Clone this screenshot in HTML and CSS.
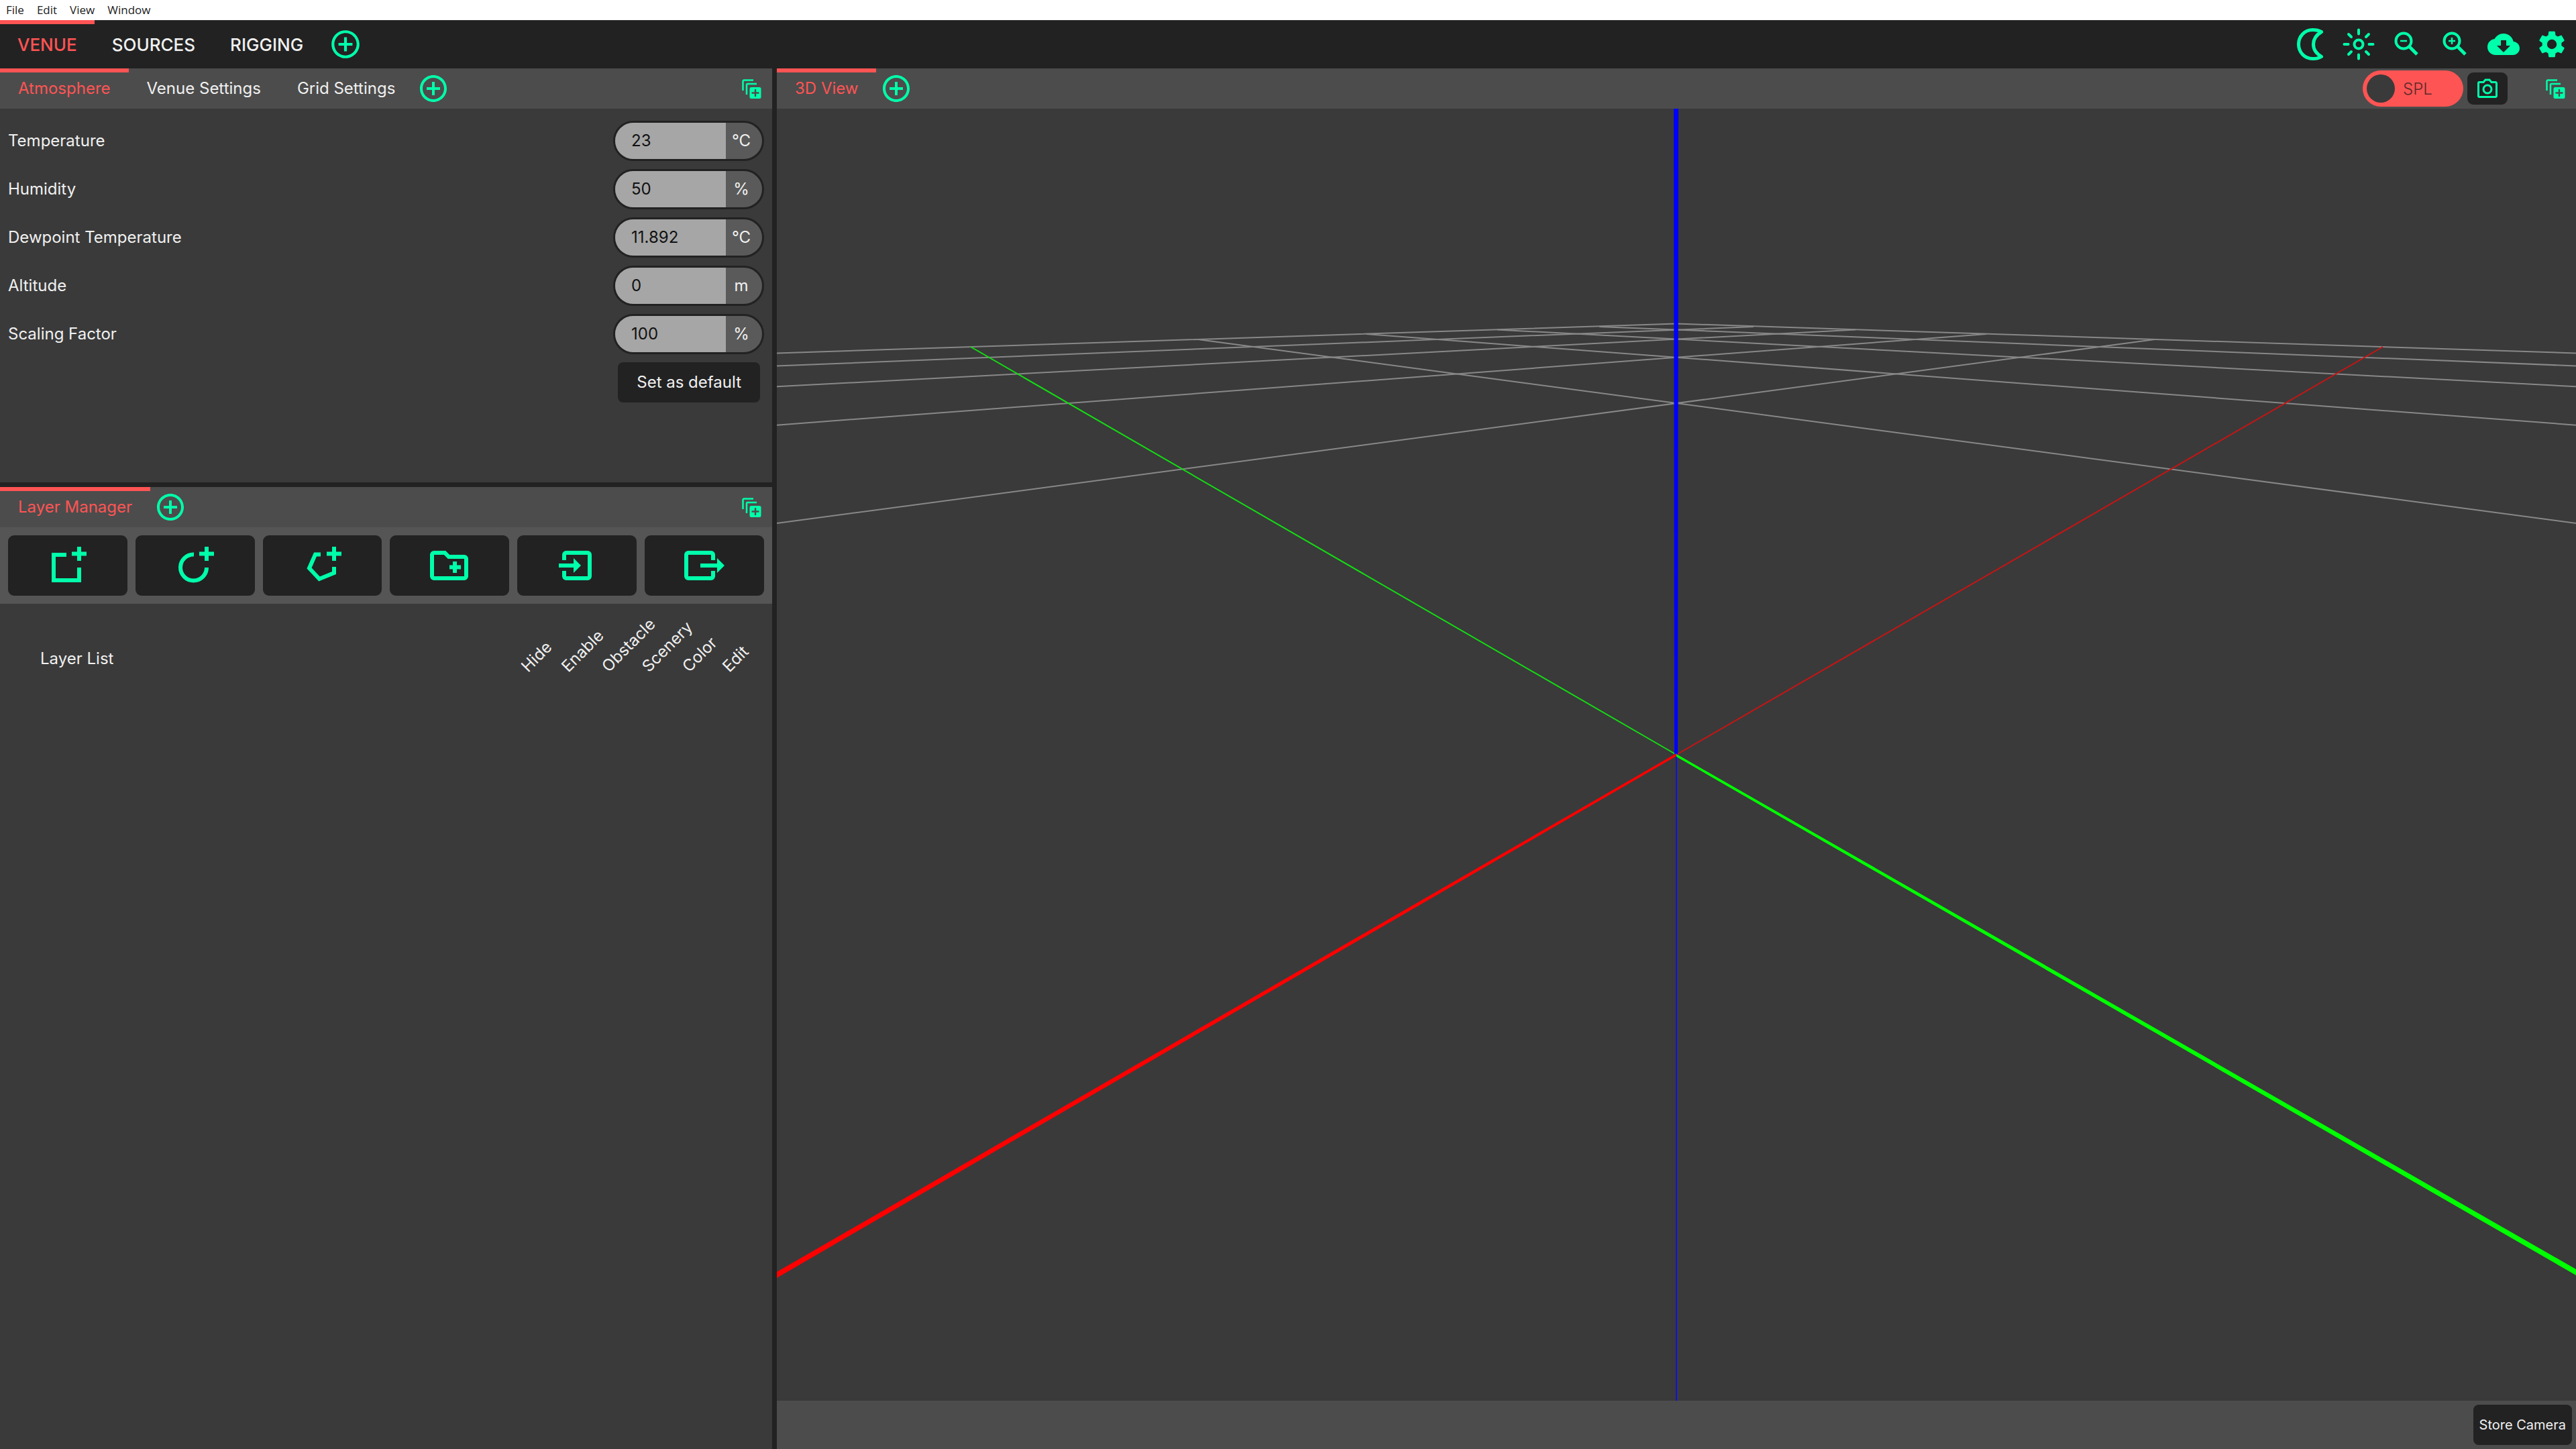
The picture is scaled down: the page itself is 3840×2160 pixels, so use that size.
FILE: index.html
```
<!DOCTYPE html>
<html lang="en">
<head>
<meta charset="utf-8">
<title>Venue</title>
<link rel="stylesheet" href="styles.css">
</head>
<body>
<svg class="defs" aria-hidden="true">
  <symbol id="i-plus" viewBox="0 0 24 24"><path d="M13 7h-2v4H7v2h4v4h2v-4h4v-2h-4V7zm-1-5C6.480 2 2 6.480 2 12s4.480 10 10 10 10-4.480 10-10S17.520 2 12 2zm0 18c-4.410 0-8-3.590-8-8s3.590-8 8-8 8 3.590 8 8-3.590 8-8 8z"/></symbol>
  <symbol id="i-dock" viewBox="0 0 29 29"><path d="M1.500 17V3a1.500 1.500 0 0 1 1.500-1.500H17M7 23V8.500A1.500 1.500 0 0 1 8.500 7H22" fill="none" stroke="currentColor" stroke-width="2.500"/><path fill-rule="evenodd" d="M14 12h12a2.500 2.500 0 0 1 2.500 2.500v12A2.500 2.500 0 0 1 26 29H14a2.500 2.500 0 0 1-2.500-2.500v-12A2.500 2.500 0 0 1 14 12zm4.800 3v4.300h-4.300v2.400h4.300V26h2.400v-4.300h4.300v-2.400h-4.300V15z"/></symbol>
</svg>

<nav class="menubar">
  <a href="#">File</a><a href="#">Edit</a><a href="#">View</a><a href="#">Window</a>
</nav>

<header class="topbar">
  <div class="tabs tabs-main">
    <button class="tab active">VENUE</button>
    <button class="tab">SOURCES</button>
    <button class="tab">RIGGING</button>
    <button class="add" aria-label="Add workspace"><svg><use href="#i-plus"/></svg></button>
  </div>
  <div class="actions">
    <button aria-label="Dark theme"><svg viewBox="-2 0 48 48"><path d="M38.500 5.500C34 2.800 29 2.500 25.500 2.500 13.500 2.500 4.500 12 4.500 24s9 21.500 21 21.500c4.500 0 9-.8 13-3.200C31 38 26.500 31.500 26.500 24S31 10 38.500 5.500z" fill="none" stroke="currentColor" stroke-width="5" stroke-linejoin="round"/></svg></button>
    <button aria-label="Brightness"><svg viewBox="0 0 48 48"><g fill="none" stroke="currentColor" stroke-width="4" stroke-linecap="round"><circle cx="24" cy="24" r="6.500"/><path d="M24 2.500v6M24 39.500v6M2.500 24h6M39.500 24h6M9 9l4 4M35 35l4 4M39 9l-4 4M13 35l-4 4"/></g></svg></button>
    <button aria-label="Zoom out"><svg viewBox="0 0 48 48"><g fill="none" stroke="currentColor"><circle cx="19" cy="19" r="11.500" stroke-width="4"/><path d="M28 28l11 11" stroke-width="5"/><path d="M14 19h10" stroke-width="2.500"/></g></svg></button>
    <button aria-label="Zoom in"><svg viewBox="0 0 48 48"><g fill="none" stroke="currentColor"><circle cx="19" cy="19" r="11.500" stroke-width="4"/><path d="M28 28l11 11" stroke-width="5"/><path d="M14 19h10M19 14v10" stroke-width="2.500"/></g></svg></button>
    <button aria-label="Download from cloud"><svg viewBox="0 0 24 24"><path d="M19.350 10.040C18.670 6.590 15.640 4 12 4 9.110 4 6.600 5.640 5.350 8.040 2.340 8.360 0 10.910 0 14c0 3.310 2.690 6 6 6h13c2.760 0 5-2.240 5-5 0-2.640-2.050-4.780-4.650-4.960zM17 13l-5 5-5-5h3V9h4v4h3z"/></svg></button>
    <button aria-label="Settings"><svg viewBox="0 0 24 24"><path d="M19.140 12.940c.04-.3.060-.61.060-.94 0-.32-.02-.64-.07-.94l2.030-1.580a.49.49 0 0 0 .12-.61l-1.920-3.320a.49.49 0 0 0-.59-.22l-2.390.96c-.5-.38-1.030-.7-1.620-.94l-.36-2.540a.48.48 0 0 0-.48-.41h-3.840a.47.47 0 0 0-.47.41l-.36 2.540c-.59.24-1.130.57-1.620.94l-2.390-.96a.48.48 0 0 0-.59.220L2.740 8.870a.47.47 0 0 0 .12.610l2.030 1.580c-.05.300-.09.630-.09.940s.02.640.07.940l-2.030 1.580a.49.49 0 0 0-.12.610l1.920 3.320c.12.220.37.290.59.220l2.390-.96c.5.380 1.030.7 1.620.94l.36 2.540c.05.240.24.410.48.410h3.840c.24 0 .44-.17.470-.41l.36-2.540c.59-.24 1.130-.56 1.620-.94l2.390.96c.22.080.47 0 .59-.22l1.920-3.320a.47.47 0 0 0-.12-.61zM12 15.600a3.600 3.600 0 1 1 0-7.200 3.600 3.600 0 0 1 0 7.200z"/></svg></button>
  </div>
</header>

<main class="workspace">
  <div class="side">
    <section class="panel atmosphere">
      <div class="panel-head">
        <div class="tabs">
          <button class="tab active">Atmosphere</button>
          <button class="tab">Venue Settings</button>
          <button class="tab">Grid Settings</button>
          <button class="add" aria-label="Add tab"><svg><use href="#i-plus"/></svg></button>
        </div>
        <button class="dock" aria-label="Add panel"><svg><use href="#i-dock"/></svg></button>
      </div>
      <form class="fields">
        <div class="field"><label for="temp">Temperature</label><span class="pill"><input id="temp" value="23"><span class="unit">°C</span></span></div>
        <div class="field"><label for="hum">Humidity</label><span class="pill"><input id="hum" value="50"><span class="unit">%</span></span></div>
        <div class="field"><label for="dew">Dewpoint Temperature</label><span class="pill"><input id="dew" value="11.892"><span class="unit">°C</span></span></div>
        <div class="field"><label for="alt">Altitude</label><span class="pill"><input id="alt" value="0"><span class="unit">m</span></span></div>
        <div class="field"><label for="scale">Scaling Factor</label><span class="pill"><input id="scale" value="100"><span class="unit">%</span></span></div>
        <div class="field submit"><button type="button" class="btn">Set as default</button></div>
      </form>
    </section>

    <section class="panel layers">
      <div class="panel-head">
        <div class="tabs">
          <button class="tab active">Layer Manager</button>
          <button class="add" aria-label="Add tab"><svg><use href="#i-plus"/></svg></button>
        </div>
        <button class="dock" aria-label="Add panel"><svg><use href="#i-dock"/></svg></button>
      </div>
      <div class="toolbar">
        <button aria-label="Add rectangle"><svg viewBox="2 0 64 64"><path d="M32 16H13v38h38V35M51 4v21M40 14.500h22" /></svg></button>
        <button aria-label="Add circle"><svg viewBox="2 0 64 64"><path d="M32 15.500a19.500 19.500 0 1 0 19 19.500M51 4v21M40 14.500h22"/></svg></button>
        <button aria-label="Add polygon"><svg viewBox="2 0 64 64"><path d="M31 15.500h-8L14 36l15 16 22-9V34M51 4v21M40 14.500h22"/></svg></button>
        <button aria-label="Add group"><svg viewBox="0 0 64 64"><path d="M9 13h16l6 6h23a3 3 0 0 1 3 3v26a3 3 0 0 1-3 3H9a3 3 0 0 1-3-3V16a3 3 0 0 1 3-3zM40 26v17M32 34.500h17"/></svg></button>
        <button aria-label="Import"><svg viewBox="0 0 64 64"><path d="M13 24v-8a3 3 0 0 1 3-3h32a3 3 0 0 1 3 3v32a3 3 0 0 1-3 3H16a3 3 0 0 1-3-3v-8M5 32h24"/><path class="head" d="M27 21l11 11-11 11z"/></svg></button>
        <button aria-label="Export"><svg viewBox="0 0 64 64"><path d="M45 24v-8a3 3 0 0 0-3-3H8a3 3 0 0 0-3 3v32a3 3 0 0 0 3 3h34a3 3 0 0 0 3-3v-8M26 32h26"/><path class="head" d="M51 21l11 11-11 11z"/></svg></button>
      </div>
      <table class="layer-list">
        <thead>
          <tr><th class="name">Layer List</th><th><span>Hide</span></th><th><span>Enable</span></th><th><span>Obstacle</span></th><th><span>Scenery</span></th><th><span>Color</span></th><th><span>Edit</span></th></tr>
        </thead>
      </table>
    </section>
  </div>

  <section class="panel view">
    <div class="panel-head">
      <div class="tabs">
        <button class="tab active">3D View</button>
        <button class="add" aria-label="Add tab"><svg><use href="#i-plus"/></svg></button>
      </div>
      <div class="view-tools">
        <label class="toggle"><input type="checkbox"><span>SPL</span></label>
        <button class="camera" aria-label="Take picture"><svg viewBox="0 0 32 32"><path d="M4 6.500h6L13 3h6l3 3.500h6A1.500 1.500 0 0 1 29.500 8v19a1.500 1.500 0 0 1-1.500 1.500H4A1.500 1.500 0 0 1 2.500 27V8A1.500 1.500 0 0 1 4 6.500z"/><circle cx="16" cy="17" r="6"/></svg></button>
        <button class="dock" aria-label="Add panel"><svg><use href="#i-dock"/></svg></button>
      </div>
    </div>
    <svg class="scene" viewBox="1158 162 2682 1926" preserveAspectRatio="xMidYMid meet" role="img" aria-label="3D view of the venue grid">
      <g class="grid">
        <path d="M1158 526.500L2499 482.500L3840 526.500"/>
        <path d="M1158 780L3212 506M1158 633.700L2961 498M1158 576.300L2766 491.500M1158 545.500L2614 487"/>
        <path d="M3840 780L1786 506M3840 633.700L2037 498M3840 576.300L2232 491.500M3840 545.500L2384 487"/>
      </g>
      <path class="x far" d="M3552 517L2499 1125"/>
      <path class="y far" d="M1447 517L2499 1125"/>
      <path class="z" d="M2495 162h7l-1 963h-5z"/>
      <path class="z near" d="M2498 1125h2v963h-2z"/>
      <path class="x" d="M2499 1123L1158 1896v9L2499 1127z"/>
      <path class="y" d="M2499 1124L3840 1892v9L2499 1128z"/>
    </svg>
    <footer class="view-foot"><button class="btn small">Store Camera</button></footer>
  </section>
</main>
</body>
</html>
```
FILE: styles.css
```
:root {
  --accent: #0fa;
  --red: #ff5454;
  --dark: #222;
  --base: #3a3a3a;
  --head: #4c4c4c;
  --raised: #555;
  --text: #f0f0f0;
}

* { box-sizing: border-box; }

body {
  margin: 0;
  height: 100vh;
  display: flex;
  flex-direction: column;
  overflow: hidden;
  background: var(--dark);
  color: var(--text);
  font: 24px/30px Inter, sans-serif;
}

button {
  margin: 0;
  padding: 0;
  border: 0;
  background: none;
  color: inherit;
  font: inherit;
}

svg { display: block; fill: currentColor; }
.defs { display: none; }

.menubar {
  display: flex;
  gap: 19px;
  height: 30px;
  padding: 0 9px;
  background: #fff;
  font: 17px/30px "Open Sans", sans-serif;
}
.menubar a { color: #222; text-decoration: none; }

.topbar {
  display: flex;
  justify-content: space-between;
  height: 72px;
  background: var(--dark);
}

.tabs { display: flex; align-items: stretch; }
.tab {
  padding: 0 27px;
  border-top: 6px solid transparent;
  border-bottom: 6px solid transparent;
  white-space: nowrap;
}
.tab.active { border-top-color: var(--red); color: var(--red); }
.tabs-main { font-size: 26px; font-weight: 500; }
.tabs-main .tab { padding: 2px 26px 0; }

.add {
  display: flex;
  align-items: center;
  padding: 0 6px;
  color: var(--accent);
}
.add svg { width: 48px; height: 48px; }
.tabs-main .add { padding: 0 12px; }
.tabs-main .add svg { width: 50px; height: 50px; }

.actions { display: flex; color: var(--accent); }
.actions button { width: 72px; display: grid; place-items: center; }
.actions svg { width: 48px; height: 48px; }

.workspace {
  flex: 1;
  min-height: 0;
  display: grid;
  grid-template-columns: calc(30% - 1px) 1fr;
  gap: 7px;
}

.side {
  display: grid;
  grid-template-rows: 617px 1fr;
  gap: 7px;
  min-height: 0;
}

.panel { display: flex; flex-direction: column; min-width: 0; min-height: 0; background: var(--base); }
.panel-head {
  display: flex;
  justify-content: space-between;
  height: 60px;
  background: var(--head);
}
.dock { padding: 0 16px; color: var(--accent); }
.dock svg { width: 29px; height: 29px; }

.fields { padding-top: 12px; }
.field {
  display: flex;
  align-items: center;
  justify-content: space-between;
  height: 72px;
  padding: 0 12px;
}
.pill {
  display: flex;
  width: 225px;
  height: 60px;
  border: 3px solid var(--dark);
  border-radius: 30px;
  overflow: hidden;
  background: #5a5a5a;
}
.pill input {
  width: 165px;
  padding: 0 24px;
  border: 0;
  background: #a6a6a6;
  color: #111;
  font: inherit;
}
.unit { flex: 1; padding-right: 8px; text-align: center; line-height: 54px; }
.submit { justify-content: flex-end; padding-right: 18px; }
.btn {
  height: 60px;
  padding: 0 28px;
  border-radius: 8px;
  background: var(--dark);
}
.btn.small { padding: 0 9px; font-size: 20px; }

.toolbar {
  display: grid;
  grid-template-columns: repeat(6, 1fr);
  gap: 12px;
  padding: 12px;
  background: var(--raised);
}
.toolbar button {
  display: grid;
  place-items: center;
  height: 90px;
  border-radius: 9px;
  background: var(--dark);
  color: var(--accent);
}
.toolbar svg { width: 64px; height: 64px; fill: none; stroke: currentColor; stroke-width: 6; }
.toolbar .head { fill: currentColor; stroke: none; }

.layer-list { width: 100%; table-layout: fixed; border-collapse: collapse; }
.layer-list th { width: 60px; height: 120px; padding: 0 0 16px; font-weight: 400; vertical-align: bottom; text-align: left; }
.layer-list th.name { width: auto; padding: 0 0 23px 60px; }
.layer-list th:last-child { width: 73px; }
.layer-list span { display: block; transform: rotate(-45deg); transform-origin: 12px 50%; white-space: nowrap; }

.view-tools { display: flex; align-items: center; }
.toggle {
  display: flex;
  align-items: center;
  width: 150px;
  height: 54px;
  padding: 0 6px;
  gap: 12px;
  border-radius: 27px;
  background: var(--red);
  color: #5a2a2a;
}
.toggle input {
  appearance: none;
  width: 42px;
  height: 42px;
  margin: 0;
  border-radius: 50%;
  background: var(--base);
}
.toggle span { padding-top: 2px; font-weight: 300; }
.camera {
  display: grid;
  place-items: center;
  width: 60px;
  height: 48px;
  margin: 0 41px 0 6px;
  border-radius: 9px;
  background: var(--dark);
  color: var(--accent);
}
.camera svg { width: 32px; height: 32px; fill: none; stroke: currentColor; stroke-width: 3; }

.scene { flex: 1; width: 100%; min-height: 0; }
.grid { fill: none; stroke: #888; stroke-width: 2; }
.x { fill: #f00; }
.y { fill: #0f0; }
.z { fill: #00f; }
.z.near { fill: #1010e0; }
.far { fill: none; stroke-width: 2; }
.x.far { stroke: #c81414; }
.y.far { stroke: #14dc14; }

.view-foot {
  display: flex;
  align-items: center;
  justify-content: flex-end;
  height: 72px;
  padding: 0 6px;
  background: var(--head);
}
```
